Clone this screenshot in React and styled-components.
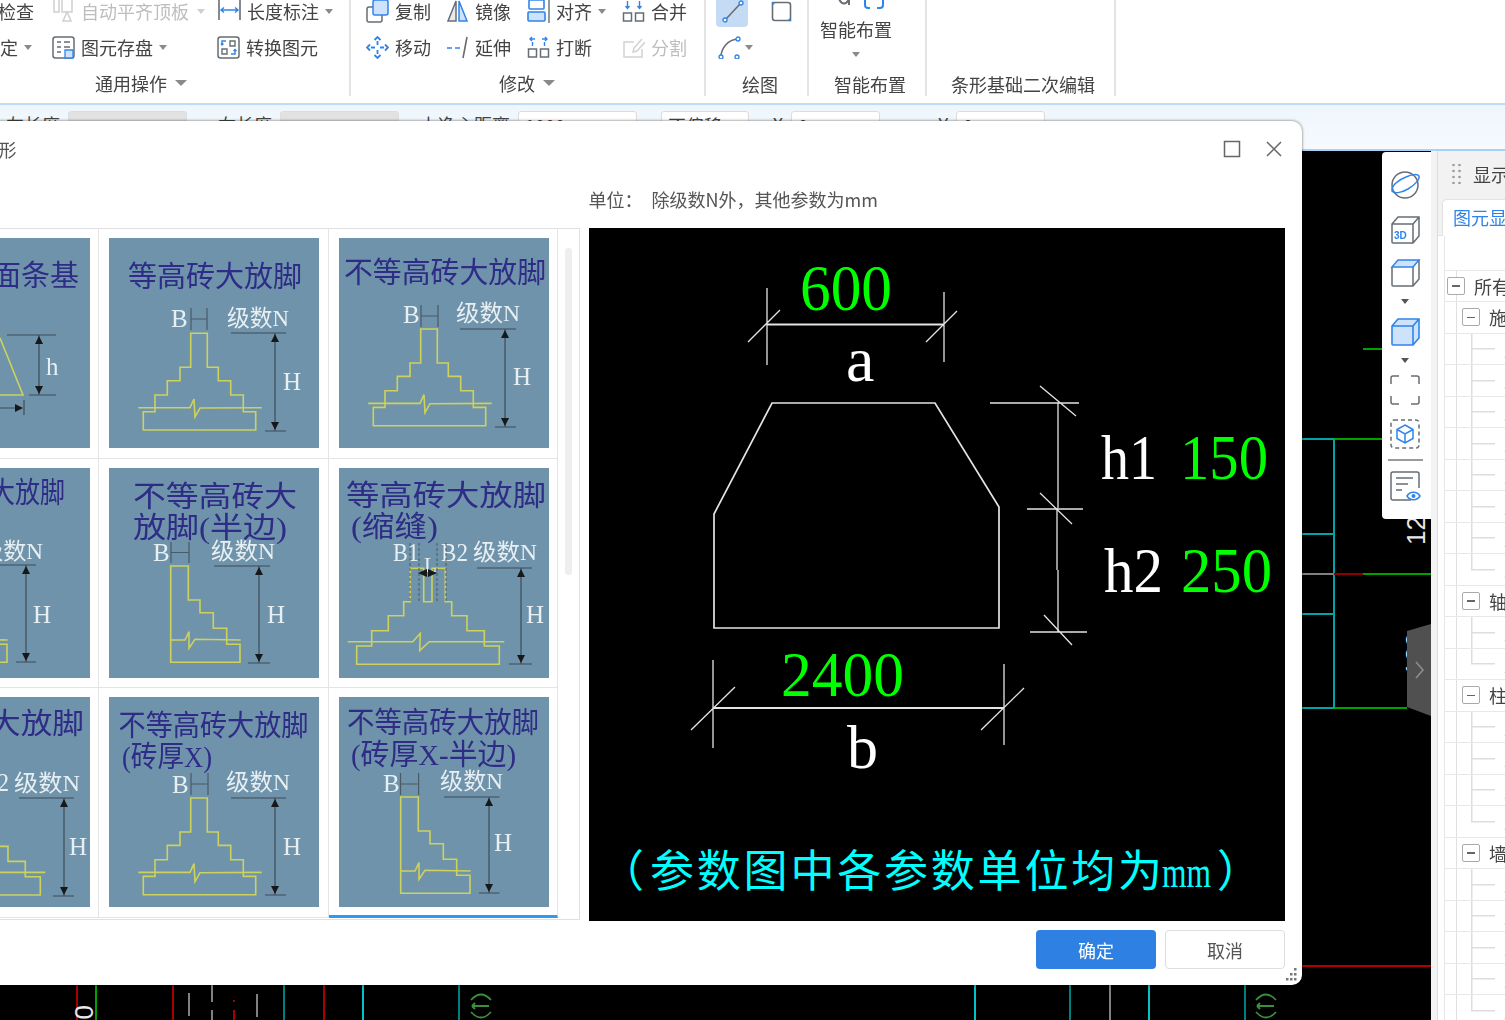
import React from 'react'
import styled, { createGlobalStyle } from 'styled-components'

const GlobalStyle = createGlobalStyle`
  html, body { margin: 0; padding: 0; background: #000; overflow: hidden; }
  * { box-sizing: border-box; }
`

const FONT = `"Noto Sans CJK SC", "Noto Sans", sans-serif`
const SERIF = `"Liberation Serif", "Noto Sans CJK SC", serif`
const GRAY = '#666d75'
const BLUE = '#2f84ea'
const TINT = '#cfe2fb'

const Page = styled.div`
  position: relative;
  width: 1505px;
  height: 1020px;
  overflow: hidden;
  display: flex;
  flex-direction: column;
  font-family: ${FONT};
  font-size: 18px;
  color: #444;
`

/* ---------- ribbon ---------- */

const Ribbon = styled.div`
  flex: none;
  height: 103px;
  display: flex;
  background: #fff;
  overflow: hidden;
  filter: blur(0.45px);
`
const Group = styled.div`
  flex: none;
  width: ${(p) => p.$w}px;
  height: 103px;
  margin-top: -7px;
  border-right: 2px solid #e4e4e4;
  padding-left: ${(p) => p.$pad || 0}px;
`
const Cols = styled.div`
  height: 72px;
  display: grid;
  grid-template-columns: ${(p) => p.$cols};
  grid-auto-rows: 36px;
`
const Item = styled.div`
  display: flex;
  align-items: center;
  gap: 6px;
  height: 36px;
  white-space: nowrap;
  margin-left: ${(p) => p.$ml || 0}px;
  color: ${(p) => (p.$off ? '#bdbdbd' : '#444')};
`
const Caret = styled.span`
  flex: none;
  width: 0;
  height: 0;
  border-left: 4px solid transparent;
  border-right: 4px solid transparent;
  border-top: 5px solid ${(p) => p.$c || '#8a8a8a'};
  margin-left: ${(p) => p.$ml ?? 0}px;
  margin-top: ${(p) => p.$mt ?? 0}px;
`
const LabelCaret = styled.span`
  flex: none;
  width: 0;
  height: 0;
  border-left: 6px solid transparent;
  border-right: 6px solid transparent;
  border-top: 6px solid #8a8a8a;
`
const GroupLabel = styled.div`
  height: 30px;
  display: flex;
  align-items: center;
  gap: 8px;
  margin-left: ${(p) => p.$at}px;
  margin-top: ${(p) => p.$dy || 0}px;
  white-space: nowrap;
`
const Ico = styled.svg`
  flex: none;
  width: 23px;
  height: 23px;
  display: block;
`
const DrawBtn = styled.div`
  width: 32px;
  height: 32px;
  border-radius: 4px;
  display: flex;
  align-items: center;
  justify-content: center;
  background: ${(p) => (p.$on ? '#c5dbf3' : 'transparent')};
`
const SmartCol = styled.div`
  width: 72px;
  height: 72px;
  margin-left: 11px;
  display: flex;
  flex-direction: column;
  align-items: center;
`
const SmartTop = styled.svg`
  flex: none;
  width: 48px;
  height: 16px;
  display: block;
  margin-left: 10px;
`
const SmartText = styled.div`
  margin-top: 6px;
  height: 28px;
  line-height: 28px;
  white-space: nowrap;
`

const DimIcon = () => (
  <Ico viewBox="0 0 23 23" fill="none">
    <path d="M1 -2V20M22 -2V20" stroke={GRAY} strokeWidth="1.6" />
    <path d="M3 10H20M6 7.5 3 10l3 2.5M17 7.5l3 2.5-3 2.5" stroke={BLUE} strokeWidth="1.4" />
  </Ico>
)
const AutoAlignIcon = () => (
  <Ico viewBox="0 0 23 23" fill="none" stroke="#cfcfcf" strokeWidth="1.5">
    <path d="M2 -2V12H7V-2M10 -2V12H20V-2" />
    <path d="M11 21 15 12l4 9Z" />
  </Ico>
)
const SaveIcon = () => (
  <Ico viewBox="0 0 23 23" fill="none">
    <rect x="1" y="1" width="21" height="21" rx="2.5" stroke={GRAY} strokeWidth="1.5" />
    <path d="M5 6H9M12 6H18M5 11H9M12 11H18M5 16H9" stroke={GRAY} strokeWidth="1.5" />
    <path d="M13 14h8v8h-8z" fill={TINT} stroke={BLUE} strokeWidth="1.3" />
  </Ico>
)
const ConvertIcon = () => (
  <Ico viewBox="0 0 23 23" fill="none">
    <rect x="1" y="1" width="21" height="21" rx="2.5" stroke={GRAY} strokeWidth="1.5" />
    <path d="M13 5h5v5h-5zM5 13h5v5H5z" stroke={GRAY} strokeWidth="1.4" />
    <path d="M9 5H5v4M4 7.5l1 1.5 1.5-1.5M14 18h4v-4M16.5 15 18 13.5l1.500 1.500" stroke={BLUE} strokeWidth="1.4" />
  </Ico>
)
const CopyIcon = () => (
  <Ico viewBox="0 0 23 23" fill="none">
    <rect x="1" y="7" width="15" height="15" rx="2" stroke={GRAY} strokeWidth="1.5" />
    <rect x="7" y="0" width="15" height="15" rx="2" fill={TINT} stroke={BLUE} strokeWidth="1.5" />
  </Ico>
)
const MirrorIcon = () => (
  <Ico viewBox="0 0 23 23" fill="none">
    <path d="M10 1 2 21h8Z" fill="#e8eaec" stroke={GRAY} strokeWidth="1.5" />
    <path d="M13 1l8 20h-8Z" fill={TINT} stroke={BLUE} strokeWidth="1.5" />
  </Ico>
)
const AlignIcon = () => (
  <Ico viewBox="0 0 23 23" fill="none">
    <rect x="2" y="0" width="15" height="9" rx="1" fill="#fff" stroke={BLUE} strokeWidth="1.6" />
    <rect x="1" y="12" width="17" height="9" rx="1" fill={TINT} stroke={BLUE} strokeWidth="1.6" />
    <path d="M22 -2V23" stroke={GRAY} strokeWidth="1.4" />
  </Ico>
)
const SquaresIcon = ({ out }) => (
  <Ico viewBox="0 0 23 23" fill="none">
    <path d="M1.500 13h8v8h-8zM13.500 13h8v8h-8z" stroke={GRAY} strokeWidth="1.5" />
    {out ? (
      <path d="M8 3H3M5 1 3 3l2 2M15 3h5M18 1l2 2-2 2M5.500 6v4M17.500 6v4" stroke={BLUE} strokeWidth="1.4" />
    ) : (
      <path d="M5.500 1v7M3.500 6l2 2.500 2-2.500M17.500 1v7M15.500 6l2 2.500 2-2.500" stroke={BLUE} strokeWidth="1.4" />
    )}
  </Ico>
)
const MoveIcon = () => (
  <Ico viewBox="0 0 23 23" fill="none" stroke={BLUE} strokeWidth="1.8">
    <path d="M11.500 5V9M11.500 14V18M5 11.500H9M14 11.500H18" />
    <path d="M8.500 4 11.500 1l3 3M8.500 19l3 3 3-3M4 8.500 1 11.500l3 3M19 8.500l3 3-3 3" />
  </Ico>
)
const ExtendIcon = () => (
  <Ico viewBox="0 0 23 23" fill="none">
    <path d="M1 12H6M9 12H14" stroke={BLUE} strokeWidth="1.6" />
    <path d="M21 1 17 22" stroke={GRAY} strokeWidth="1.6" />
  </Ico>
)
const SplitIcon = () => (
  <Ico viewBox="0 0 23 23" fill="none" stroke="#d2d2d2" strokeWidth="1.5">
    <path d="M12 6H2v15h18V13" />
    <path d="M20 3 12 12l-1 4 4-1 8-9" />
  </Ico>
)
const LineIcon = () => (
  <Ico viewBox="0 0 23 23" fill="none">
    <path d="M5 19 19 4" stroke={GRAY} strokeWidth="1.6" />
    <circle cx="4" cy="20" r="2" fill="#fff" stroke={BLUE} strokeWidth="1.3" />
    <circle cx="20" cy="3" r="2" fill="#fff" stroke={BLUE} strokeWidth="1.3" />
  </Ico>
)
const RectIcon = () => (
  <Ico viewBox="0 0 23 23" fill="none">
    <rect x="2.500" y="2.500" width="18" height="18" rx="2.500" stroke={GRAY} strokeWidth="1.6" />
    <circle cx="3" cy="3" r="1.500" fill={BLUE} />
    <circle cx="20" cy="20" r="1.500" fill={BLUE} />
  </Ico>
)
const ArcIcon = () => (
  <Ico viewBox="0 0 23 23" fill="none">
    <path d="M3 21C3 12 10 4 19 3" stroke={GRAY} strokeWidth="1.6" />
    <circle cx="3" cy="21" r="2" fill="#fff" stroke={BLUE} strokeWidth="1.3" />
    <circle cx="20" cy="3" r="2" fill="#fff" stroke={BLUE} strokeWidth="1.3" />
    <circle cx="19" cy="21" r="2" fill="#fff" stroke={BLUE} strokeWidth="1.3" />
  </Ico>
)

/* ---------- option bar ---------- */

const OptionBar = styled.div`
  flex: none;
  height: 48px;
  display: flex;
  padding-top: 6px;
  border-top: 2px solid #bcdcf7;
  border-bottom: 2px solid #a9d1f3;
  background: linear-gradient(#eef6fc, #f6fafe);
`
const FieldLabel = styled.div`
  flex: none;
  width: ${(p) => p.$w}px;
  padding-right: 8px;
  text-align: right;
  white-space: nowrap;
`
const Field = styled.div`
  flex: none;
  width: ${(p) => p.$w}px;
  height: 30px;
  padding-left: 6px;
  border: 1px solid #ddd;
  border-radius: 3px;
  background: ${(p) => (p.$off ? '#e2e2e2' : '#fff')};
`

/* ---------- work area ---------- */

const Work = styled.div`
  flex: 1;
  min-height: 0;
  display: flex;
`
const Canvas = styled.div`
  position: relative;
  flex: none;
  width: 1431px;
  background: #000;
  overflow: hidden;
`
const CadLines = styled.svg`
  display: block;
  width: 1431px;
  height: 869px;
`
const CadText = styled.text`
  font-family: "Liberation Sans", sans-serif;
  font-size: ${(p) => p.$s}px;
  fill: #e8e8e8;
`
const ToolPanel = styled.div`
  position: absolute;
  left: 1382px;
  top: 1px;
  width: 49px;
  height: 367px;
  padding: 17px 3px 0 0;
  display: flex;
  flex-direction: column;
  align-items: center;
  background: #fff;
  border-radius: 4px 0 0 4px;
  filter: blur(0.35px);
`
const ToolIcon = styled.svg`
  flex: none;
  display: block;
  width: 32px;
  height: 32px;
  margin-top: ${(p) => p.$mt || 0}px;
`
const ToolCaret = styled.div`
  flex: none;
  height: 27px;
  display: flex;
  align-items: center;
  justify-content: center;
`
const ToolRule = styled.div`
  flex: none;
  width: 35px;
  height: 2px;
  margin: 9px 0;
  background: #9a9a9a;
`
const Flap = styled.svg`
  position: absolute;
  left: 1407px;
  top: 473px;
  width: 24px;
  height: 94px;
`
const PanelGutter = styled.div`
  flex: none;
  width: 6px;
  background: #f3f3f3;
`
const SidePanel = styled.div`
  flex: 1;
  min-width: 0;
  overflow: hidden;
  background: #fff;
  border-left: 1px solid #ddd;
  white-space: nowrap;
  filter: blur(0.4px);
`
const PanelHead = styled.div`
  height: 45px;
  display: flex;
  align-items: center;
  gap: 12px;
  padding-left: 14px;
  background: #f2f2f2;
`
const Grip = styled.svg`
  flex: none;
  width: 9px;
  height: 20px;
`
const TabRow = styled.div`
  height: 40px;
  padding: 3px 0 0 4px;
  background: #f2f2f2;
  border-bottom: 1px solid #e2e2e2;
`
const Tab = styled.div`
  height: 37px;
  line-height: 34px;
  padding-left: 10px;
  color: ${BLUE};
  background: #fff;
  border: 1px solid #e2e2e2;
  border-bottom: 0;
  border-right: 0;
  border-radius: 5px 0 0 0;
`
const TreeWrap = styled.div`
  margin-left: 6px;
  padding-top: 33.500px;
  border-left: 1px solid #e6e6e6;
`
const TreeRow = styled.div`
  height: 31.500px;
  display: flex;
  align-items: stretch;
  border-top: 1.5px solid #e8e8e8;
  background: linear-gradient(#e0e0e0, #e0e0e0) 11px 0 / 1px 100% no-repeat;
  padding-left: ${(p) => p.$pad}px;
`
const Toggle = styled.span`
  flex: none;
  align-self: center;
  width: 18px;
  height: 18px;
  display: flex;
  align-items: center;
  justify-content: center;
  background: #fff;
  border: 1.5px solid #aaa;
  border-radius: 2px;
  &::after {
    content: '';
    width: 8px;
    height: 1.5px;
    background: #666;
  }
`
const TreeText = styled.span`
  align-self: center;
  margin-left: 9px;
  line-height: 24px;
`
const Stub = styled.span`
  flex: none;
  width: 24px;
  margin-left: 26px;
  background:
    linear-gradient(#ddd, #ddd) 0 0 / 1.5px ${(p) => (p.$last ? '50%' : '100%')} no-repeat,
    linear-gradient(#ddd, #ddd) 0 50% / 100% 1.5px no-repeat;
`
const LeafText = styled.span`
  align-self: center;
  margin-left: 9px;
  color: #e9a765;
  line-height: 24px;
`

/* ---------- dialog ---------- */

const Dialog = styled.div`
  position: absolute;
  left: -140px;
  top: 121px;
  width: 1442px;
  height: 864px;
  display: flex;
  flex-direction: column;
  padding-left: 9.500px;
  background: #fff;
  border-radius: 10px;
  box-shadow: 0 0 3px rgba(0, 0, 0, 0.6);
`
const TitleBar = styled.div`
  flex: none;
  height: 58px;
  display: flex;
  align-items: center;
  padding: 0 19px 2px 21px;
  filter: blur(0.4px);
`
const TitleText = styled.div`
  flex: 1;
  color: #555;
`
const WinBtn = styled.svg`
  flex: none;
  width: 18px;
  height: 18px;
  margin-left: ${(p) => p.$ml}px;
`
const InfoRow = styled.div`
  flex: none;
  height: 49px;
  display: flex;
  align-items: center;
  padding-bottom: 10px;
  color: #555;
  white-space: nowrap;
  filter: blur(0.4px);
`
const InfoLeft = styled.div`
  flex: none;
  width: 719px;
  padding-left: 42px;
`
const InfoUnit = styled.div`
  flex: none;
  width: 63px;
`
const DialogBody = styled.div`
  flex: none;
  height: 693px;
  display: flex;
  gap: 8.500px;
`
const Gallery = styled.div`
  flex: none;
  width: 710.500px;
  height: 692px;
  display: flex;
  border: 1.5px solid #e0e0e0;
  border-left: 0;
`
const Cells = styled.div`
  flex: none;
  width: 688.500px;
  display: grid;
  grid-template-columns: repeat(3, 229.500px);
  grid-auto-rows: 229.500px;
`
const Cell = styled.div`
  display: flex;
  justify-content: flex-end;
  padding: 9px 8.500px 0 0;
  border-right: 1.5px solid #e4e4e4;
  border-bottom: ${(p) => (p.$on ? `3px solid #2f9bf0` : '1.500px solid #e4e4e4')};
`
const Thumb = styled.svg`
  flex: none;
  display: block;
  width: 210px;
  height: 210px;
  background: #6f93ab;
  filter: blur(0.6px);
`
const ThumbTitle = styled.text`
  font-family: ${SERIF};
  font-size: 29px;
  fill: #2e2c86;
`
const ThumbLabel = styled.text`
  font-family: ${SERIF};
  font-size: ${(p) => p.$s || 25}px;
  fill: #e8eff3;
`
const Scroll = styled.div`
  flex: 1;
  padding: 19px 0 0 7px;
`
const ScrollThumb = styled.div`
  width: 7px;
  height: 327px;
  border-radius: 3px;
  background: #eee;
`
const Preview = styled.svg`
  flex: none;
  display: block;
  width: 696px;
  height: 693px;
  background: #000;
`
const PreviewText = styled.text`
  font-family: ${SERIF};
  font-size: ${(p) => p.$s}px;
  fill: ${(p) => p.$c};
`
const DialogFoot = styled.div`
  flex: none;
  display: flex;
  justify-content: flex-end;
  gap: 9px;
  padding: 9px 17px 0 0;
`
const Button = styled.button`
  width: 120px;
  height: 39px;
  padding: 0;
  font: inherit;
  border-radius: 4px;
  color: ${(p) => (p.$primary ? '#fff' : '#555')};
  background: ${(p) => (p.$primary ? '#2f80e3' : '#fff')};
  border: ${(p) => (p.$primary ? '0' : '1.500px solid #ddd')};
  filter: blur(0.3px);
`
const ResizeGrip = styled.svg`
  position: absolute;
  right: 5px;
  bottom: 4px;
  width: 12px;
  height: 13px;
`

/* ---------- thumbnail data ---------- */

const FULL = {
  shape: [[81.7, 0], [98.3, 0], [98.3, 34], [109.3, 34], [109.3, 47.4], [121.7, 47.4], [121.7, 61.7], [134.3, 61.7], [134.3, 78.4], [146.7, 78.4], [146.7, 96.7], [34.3, 96.7], [34.3, 78.4], [46, 78.4], [46, 61.7], [58.3, 61.7], [58.3, 47.4], [71, 47.4], [71, 34], [81.7, 34]],
  cut: [[29.3, 74.4], [81, 74.4], [85, 65.7], [86, 83.7], [91, 74.7], [152.7, 74.4]],
}
const HALF = {
  shape: [[61.7, 0], [79.3, 0], [79.3, 34], [91, 34], [91, 46.7], [104.3, 46.7], [104.3, 62.3], [117.7, 62.3], [117.7, 78.3], [131, 78.3], [131, 96.3], [61.7, 96.3]],
  cut: [[61.7, 74], [76, 74], [80, 65.7], [80, 82.3], [86, 73.3], [131.7, 74]],
}
const JOINT = {
  shape: [[71.3, 0], [84.7, 0], [84.7, 33.4], [93, 33.4], [93, 0], [106.3, 0], [106.3, 33.4], [112.7, 33.4], [112.7, 47.4], [128, 47.4], [128, 62.4], [145.3, 62.4], [145.3, 77.7], [160.3, 77.7], [160.3, 96], [17.7, 96], [17.7, 77.7], [32.7, 77.7], [32.7, 62.4], [49.3, 62.4], [49.3, 47.4], [64.7, 47.4], [64.7, 33.4], [71.3, 33.4]],
  cut: [[8.7, 73.4], [73.7, 73.4], [81.3, 65], [80.7, 82.4], [90.3, 73.4], [165.3, 73.4]],
}

const pts = (list, dx, dy) => list.map(([x, y]) => `${x + dx},${y + dy}`).join(' ')

const cards = [
  {
    titles: [['梯形截面条基', 25, 48, 174]],
    slope: true,
    dim: { x: 159, y1: 97, y2: 157, l: 127, r: 176, bl: 149 },
    small: { x: 166, y: 137, t: 'h' },
  },
  {
    titles: [['等高砖大放脚', 19, 49, 174]],
    foot: FULL, top: 95.3,
    b: [62, 89], ticks: [82, 98, 70, 92], n: [118, 88, 62],
    dim: { x: 166, y1: 95, y2: 193, l: 122, r: 177, bl: 156 },
    h: [174, 152],
  },
  {
    titles: [['不等高砖大放脚', 5, 45, 202]],
    foot: FULL, top: 91,
    b: [64, 85], ticks: [82, 99, 67, 89], n: [117, 83, 64],
    dim: { x: 166, y1: 91, y2: 189, l: 121, r: 177, bl: 156 },
    h: [174, 147],
  },
  {
    titles: [['不等高砖大放脚', 10, 35, 175]],
    foot: HALF, top: 98, fx: -4,
    n: [100, 91, 63],
    dim: { x: 146, y1: 97, y2: 194, l: 96, r: 156, bl: 136 },
    h: [153, 155],
  },
  {
    titles: [['不等高砖大', 24, 39, 164], ['放脚(半边)', 24, 70, 154]],
    foot: HALF, top: 98,
    b: [44, 93], ticks: [62, 80, 74, 95], n: [102, 91, 64],
    dim: { x: 150, y1: 98, y2: 195, l: 105, r: 161, bl: 139 },
    h: [158, 155],
  },
  {
    titles: [['等高砖大放脚', 7, 38, 200], ['(缩缝)', 12, 69, 87]],
    foot: JOINT, top: 100.3,
    b1: 93, n: [134, 92, 64], joint: true,
    dim: { x: 182, y1: 100, y2: 196, l: 138, r: 193, bl: 170 },
    h: [187, 155],
  },
  {
    titles: [['等高砖大放脚', 14, 37, 190]],
    foot: JOINT, top: 102,
    b1: 94, n: [134, 94, 66],
    dim: { x: 184, y1: 101, y2: 199, l: 139, r: 194, bl: 173 },
    h: [189, 158],
  },
  {
    titles: [['不等高砖大放脚', 9.5, 39, 190], ['(砖厚X)', 13, 70, 90]],
    foot: FULL, top: 101,
    b: [63, 96], ticks: [82, 99, 76, 98], n: [117, 93, 64],
    dim: { x: 166, y1: 101, y2: 198, l: 122, r: 177, bl: 156 },
    h: [174, 158],
  },
  {
    titles: [['不等高砖大放脚', 8, 36, 192], ['(砖厚X-半边)', 12, 68, 165]],
    foot: HALF, top: 100,
    b: [44, 95], ticks: [61.5, 79.6, 76, 98], n: [101, 92, 63],
    dim: { x: 150, y1: 100, y2: 196, l: 105, r: 160.5, bl: 140 },
    h: [155, 154],
  },
]

const DimArrow = ({ x, y1, y2, l, r, bl }) => (
  <g>
    <path d={`M${l} ${y1}H${r}M${bl} ${y2}H${r}M${x} ${y1}V${y2}`} stroke="#3f4b55" strokeWidth="1.2" fill="none" />
    <path d={`M${x} ${y1 + 1}l-4 8h8ZM${x} ${y2 - 1}l-4 -8h8Z`} fill="#16181a" />
  </g>
)

const FootingThumb = ({ card }) => {
  const { titles, foot, top, fx = 0, b, ticks, n, dim, h, slope, small, joint, b1 } = card
  return (
    <Thumb viewBox="0 0 210 210">
      {titles.map(([t, x, y, w]) => (
        <ThumbTitle key={t} x={x} y={y} textLength={w} lengthAdjust="spacingAndGlyphs">{t}</ThumbTitle>
      ))}
      {foot && (
        <>
          <polygon points={pts(foot.shape, fx, top)} fill="none" stroke="#cdd25c" strokeWidth="1.6" />
          <polyline points={pts(foot.cut, fx, top)} fill="none" stroke="#cdd25c" strokeWidth="1.6" />
        </>
      )}
      {slope && (
        <>
          <polyline points="60,157 143,157 120,100" fill="none" stroke="#cdd25c" strokeWidth="1.6" />
          <path d="M100 170H140M144 162V177" stroke="#3f4b55" strokeWidth="1.2" fill="none" />
          <path d="M143 170l-8 -4v8Z" fill="#16181a" />
        </>
      )}
      {ticks && (
        <path
          d={`M${ticks[0]} ${ticks[2]}V${ticks[3]}M${ticks[1]} ${ticks[2]}V${ticks[3]}M${ticks[0]} ${(ticks[2] + ticks[3]) / 2}H${ticks[1]}`}
          stroke="#4a5a66" strokeWidth="1.2" fill="none"
        />
      )}
      {b && <ThumbLabel x={b[0]} y={b[1]}>B</ThumbLabel>}
      {b1 && (
        <>
          <ThumbLabel x={54} y={b1} textLength={26} lengthAdjust="spacingAndGlyphs">B1</ThumbLabel>
          <ThumbLabel x={102} y={b1} textLength={27} lengthAdjust="spacingAndGlyphs">B2</ThumbLabel>
        </>
      )}
      {joint && (
        <>
          <path d="M71 75V134M80 75V134M98 75V134M107 75V134" stroke="#4a5a66" strokeWidth="1" strokeDasharray="3 2" fill="none" />
          <ThumbLabel x={85} y={104} $s={21}>L</ThumbLabel>
          <path d="M79 105l9 -4v8ZM98 105l-9 -4v8Z" fill="#16181a" />
        </>
      )}
      {n && (
        <ThumbLabel x={n[0]} y={n[1]} textLength={n[2]} lengthAdjust="spacingAndGlyphs" $s={23}>级数N</ThumbLabel>
      )}
      {dim && <DimArrow {...dim} />}
      {h && <ThumbLabel x={h[0]} y={h[1]}>H</ThumbLabel>}
      {small && <ThumbLabel x={small.x} y={small.y}>{small.t}</ThumbLabel>}
    </Thumb>
  )
}

/* ---------- tree data ---------- */

const leaves = (n, key) =>
  Array.from({ length: n }, (_, i) => ({ kind: 'leaf', key: `${key}${i}`, last: i === n - 1 }))

const treeRows = [
  { kind: 'root', key: 'all', text: '所有构件' },
  { kind: 'group', key: 'a', text: '施工段' },
  ...leaves(8, 'a'),
  { kind: 'group', key: 'b', text: '轴线' },
  ...leaves(2, 'b'),
  { kind: 'group', key: 'c', text: '柱' },
  ...leaves(4, 'c'),
  { kind: 'group', key: 'd', text: '墙' },
  ...leaves(5, 'd'),
]

const GreenMark = ({ x }) => (
  <path
    d={`M${x - 10} 1000Q${x} 989 ${x + 10} 1000M${x - 10} 1012Q${x} 1023 ${x + 10} 1012M${x - 8} 1006H${x + 8}M${x - 9} 1006l3 -3M${x - 9} 1006l3 3`}
    stroke="#3c8f3c" strokeWidth="1.800" fill="none"
  />
)

const App = () => (
  <Page>
    <GlobalStyle />

    <Ribbon>
      <Group $w={351}>
        <Cols $cols="52px 166px 1fr">
          <Item $ml={-2}>检查</Item>
          <Item $off>
            <AutoAlignIcon />自动平齐顶板<Caret $c="#cfcfcf" $ml={2} />
          </Item>
          <Item><DimIcon />长度标注<Caret /></Item>
          <Item $ml={-18}>设定<Caret /></Item>
          <Item><SaveIcon />图元存盘<Caret /></Item>
          <Item $ml={-1}><ConvertIcon />转换图元</Item>
        </Cols>
        <GroupLabel $at={95} $dy={3}>通用操作<LabelCaret /></GroupLabel>
      </Group>

      <Group $w={355} $pad={15}>
        <Cols $cols="80px 81px 95px 1fr">
          <Item><CopyIcon />复制</Item>
          <Item><MirrorIcon />镜像</Item>
          <Item><AlignIcon />对齐<Caret /></Item>
          <Item><SquaresIcon />合并</Item>
          <Item><MoveIcon />移动</Item>
          <Item><ExtendIcon />延伸</Item>
          <Item><SquaresIcon out />打断</Item>
          <Item $off><SplitIcon />分割</Item>
        </Cols>
        <GroupLabel $at={133} $dy={3}>修改<LabelCaret /></GroupLabel>
      </Group>

      <Group $w={103} $pad={10}>
        <Cols $cols="54px 1fr">
          <Item><DrawBtn $on><LineIcon /></DrawBtn></Item>
          <Item><RectIcon /></Item>
          <Item $ml={2}><ArcIcon /><Caret $ml={-2} /></Item>
        </Cols>
        <GroupLabel $at={26} $dy={4}>绘图</GroupLabel>
      </Group>

      <Group $w={118}>
        <SmartCol>
          <SmartTop viewBox="0 0 48 16" fill="none">
            <path d="M2 6c3 6 7 6 10 0M12 2v10M16 6h5" stroke={GRAY} strokeWidth="2" />
            <path d="M28 7v5c0 2 1 3 3 3h2M40 15h3c2 0 3-1 3-3V7" stroke={BLUE} strokeWidth="2" />
          </SmartTop>
          <SmartText>智能布置</SmartText>
          <Caret $mt={9} />
        </SmartCol>
        <GroupLabel $at={25} $dy={4}>智能布置</GroupLabel>
      </Group>

      <Group $w={189}>
        <Cols $cols="1fr" />
        <GroupLabel $at={24} $dy={4}>条形基础二次编辑</GroupLabel>
      </Group>
    </Ribbon>

    <OptionBar>
      <FieldLabel $w={68}>左长度</FieldLabel>
      <Field $w={119} $off />
      <FieldLabel $w={93}>右长度</FieldLabel>
      <Field $w={119} $off />
      <FieldLabel $w={119}>上净心距离</FieldLabel>
      <Field $w={119}>1000</Field>
      <FieldLabel $w={24} />
      <Field $w={88}>不偏移</Field>
      <FieldLabel $w={42}>X</FieldLabel>
      <Field $w={89}>0</Field>
      <FieldLabel $w={76}>Y</FieldLabel>
      <Field $w={89}>0</Field>
    </OptionBar>

    <Work>
      <Canvas>
        <CadLines viewBox="0 151 1431 869" fill="none" strokeWidth="2">
          <path d="M1363 349H1382M1334 439H1382M1334 708H1407M1363 574H1431" stroke="#00a000" />
          <path d="M1302 439H1334M1302 534H1334M1302 614H1334M1302 708H1334M1334 439V708" stroke="#00a5a8" />
          <path d="M1302 574H1334" stroke="#808080" />
          <path d="M1334 574H1363" stroke="#8a0000" />
          <path d="M1302 966H1431" stroke="#b00000" />
          <path d="M77 985V1020M173 985V1020M324 985V1020M234 1010V1020M234 1000V1002" stroke="#a80000" />
          <path d="M96 985V1020" stroke="#00a000" />
          <path d="M189 993V1016M212 985V1002M212 1010V1020M257 994V1017M1110 985V1020" stroke="#808080" />
          <path d="M284 985V1020M459 985V1020M1070 985V1020M1245 985V1020" stroke="#007f80" />
          <path d="M363 985V1020M975 985V1020M1149 985V1020" stroke="#00c4c8" />
          <GreenMark x={481} />
          <GreenMark x={1266} />
          <CadText $s={26} x={0} y={0} transform="translate(1425 545) rotate(-90)">12</CadText>
          <CadText $s={26} x={0} y={0} transform="translate(1424 676) rotate(-90)">120</CadText>
          <CadText $s={26} x={0} y={0} textAnchor="end" transform="translate(93 1005) rotate(-90)">1500</CadText>
        </CadLines>

        <ToolPanel>
          <ToolIcon viewBox="0 0 32 32" fill="none">
            <circle cx="16" cy="16" r="13" stroke={GRAY} strokeWidth="1.500" />
            <path d="M3 22C2 17 9 11 17 8c6-3 12-3 13-1 1 3-4 9-11 13-7 4-14 5-16 2Z" stroke={BLUE} strokeWidth="1.500" />
          </ToolIcon>
          <ToolIcon $mt={12} viewBox="0 0 32 32" fill="none" stroke={GRAY} strokeWidth="1.500">
            <path d="M3 11 9 4h21v19l-6 7H4a1 1 0 0 1-1-1ZM3 11h21v19M24 11l6-7" />
            <text x="5" y="26" fontSize="10" fontWeight="700" fontFamily="Liberation Sans" fill={BLUE} stroke="none">3D</text>
          </ToolIcon>
          <ToolIcon $mt={11} viewBox="0 0 32 32" fill="none" strokeWidth="1.500">
            <path d="M3 11v18a1 1 0 0 0 1 1h20l6-7V4M24 11v19" stroke={GRAY} />
            <path d="M3 11 9 4h21l-6 7Z" fill={TINT} stroke={BLUE} />
          </ToolIcon>
          <ToolCaret><Caret $c="#555" /></ToolCaret>
          <ToolIcon viewBox="0 0 32 32" fill={TINT} stroke={BLUE} strokeWidth="1.600">
            <path d="M3 11 9 4h21v19l-6 7H4a1 1 0 0 1-1-1ZM3 11h21v19M24 11l6-7" />
          </ToolIcon>
          <ToolCaret><Caret $c="#555" /></ToolCaret>
          <ToolIcon viewBox="0 0 32 32" fill="none" stroke={GRAY} strokeWidth="1.500">
            <path d="M2 10V4a2 2 0 0 1 2-2h6M22 2h6a2 2 0 0 1 2 2v6M30 22v6a2 2 0 0 1-2 2h-6M10 30H4a2 2 0 0 1-2-2v-6" />
          </ToolIcon>
          <ToolIcon $mt={12} viewBox="0 0 32 32" fill="none">
            <rect x="2" y="2" width="28" height="28" rx="3" stroke={GRAY} strokeWidth="1.500" strokeDasharray="4 3" />
            <path d="M16 7 24 11.500v9L16 25l-8-4.500v-9ZM8 11.500 16 16l8-4.500M16 16v9" stroke={BLUE} strokeWidth="1.500" />
          </ToolIcon>
          <ToolRule />
          <ToolIcon viewBox="0 0 32 32" fill="none">
            <path d="M22 30H4a2 2 0 0 1-2-2V4a2 2 0 0 1 2-2h24a2 2 0 0 1 2 2v14" stroke={GRAY} strokeWidth="1.500" />
            <path d="M7 8H24M7 14H19M7 20H13" stroke={GRAY} strokeWidth="1.500" />
            <path d="M18 26c3-5 10-5 13 0-3 5-10 5-13 0Z" fill="#fff" stroke={BLUE} strokeWidth="1.500" />
            <circle cx="24.500" cy="26" r="2" fill={BLUE} />
          </ToolIcon>
        </ToolPanel>

        <Flap viewBox="0 0 24 94">
          <path d="M24 0 0 7V83L24 92Z" fill="#505050" />
          <path d="M9 38 16 46 9 54" fill="none" stroke="#8a8a8a" strokeWidth="1.800" />
        </Flap>
      </Canvas>
      <PanelGutter />
      <SidePanel>
        <PanelHead>
          <Grip viewBox="0 0 9 20" fill="#9a9a9a">
            {[1, 7, 13, 19].map((y) => (
              <React.Fragment key={y}>
                <circle cx="1.500" cy={y} r="1.300" />
                <circle cx="7.500" cy={y} r="1.300" />
              </React.Fragment>
            ))}
          </Grip>
          显示设置
        </PanelHead>
        <TabRow><Tab>图元显示</Tab></TabRow>
        <TreeWrap>
          {treeRows.map((row) =>
            row.kind === 'leaf' ? (
              <TreeRow key={row.key} $pad={0}>
                <Stub $last={row.last} />
                <LeafText>显示</LeafText>
              </TreeRow>
            ) : (
              <TreeRow key={row.key} $pad={row.kind === 'root' ? 2 : 17}>
                <Toggle />
                <TreeText>{row.text}</TreeText>
              </TreeRow>
            )
          )}
        </TreeWrap>
      </SidePanel>
    </Work>

    <Dialog>
      <TitleBar>
        <TitleText>选择参数化图形</TitleText>
        <WinBtn viewBox="0 0 18 18" fill="none" stroke="#666" strokeWidth="1.500">
          <rect x="1.500" y="1.500" width="15" height="15" />
        </WinBtn>
        <WinBtn $ml={24} viewBox="0 0 18 18" fill="none" stroke="#666" strokeWidth="1.500">
          <path d="M2 2 16 16M16 2 2 16" />
        </WinBtn>
      </TitleBar>
      <InfoRow>
        <InfoLeft>选择图形：</InfoLeft>
        <InfoUnit>单位：</InfoUnit>
        除级数N外，其他参数为mm
      </InfoRow>
      <DialogBody>
        <Gallery>
          <Cells>
            {cards.map((card, i) => (
              <Cell key={i} $on={i === 8}>
                <FootingThumb card={card} />
              </Cell>
            ))}
          </Cells>
          <Scroll><ScrollThumb /></Scroll>
        </Gallery>
        <Preview viewBox="589 228 696 693" fill="none">
          <g stroke="#e4e4e4" strokeWidth="1.300">
            <path d="M767 288V365M944 292V362M748 342 780 310M926 342 957 311" />
            <path d="M767 324.500H944" strokeWidth="2" />
            <path d="M772 403H935L999 507V628H714V514Z" strokeWidth="1.700" />
            <path d="M990 403H1079M1058 403V508M1057 508V570M1058 570V632M1040 386 1076 416" />
            <path d="M1027 509H1083M1040 493 1072 524M1030 632H1087M1044 615 1072 645" />
            <path d="M713 660V748M1004 664V745M691 730 735 687M981 730 1024 688" />
            <path d="M713 708H1004" strokeWidth="2" />
          </g>
          <PreviewText $s={66} $c="#00ff00" x={800} y={310} textLength={92} lengthAdjust="spacingAndGlyphs">600</PreviewText>
          <PreviewText $s={64} $c="#fff" x={846} y={381}>a</PreviewText>
          <PreviewText $s={64} $c="#fff" x={1101} y={479} textLength={56} lengthAdjust="spacingAndGlyphs">h1</PreviewText>
          <PreviewText $s={64} $c="#00ff00" x={1180} y={479} textLength={88} lengthAdjust="spacingAndGlyphs">150</PreviewText>
          <PreviewText $s={64} $c="#fff" x={1104} y={592} textLength={59} lengthAdjust="spacingAndGlyphs">h2</PreviewText>
          <PreviewText $s={64} $c="#00ff00" x={1181} y={592} textLength={91} lengthAdjust="spacingAndGlyphs">250</PreviewText>
          <PreviewText $s={64} $c="#00ff00" x={781} y={696} textLength={123} lengthAdjust="spacingAndGlyphs">2400</PreviewText>
          <PreviewText $s={62} $c="#fff" x={847} y={768}>b</PreviewText>
          <PreviewText $s={44} $c="#00ffff" x={600} y={887}>（</PreviewText>
          <PreviewText $s={44} $c="#00ffff" x={650} y={887} textLength={512} lengthAdjust="spacing">参数图中各参数单位均为</PreviewText>
          <PreviewText $s={44} $c="#00ffff" x={1162} y={887} textLength={49} lengthAdjust="spacingAndGlyphs">mm</PreviewText>
          <PreviewText $s={44} $c="#00ffff" x={1217} y={887}>）</PreviewText>
        </Preview>
      </DialogBody>
      <DialogFoot>
        <Button $primary>确定</Button>
        <Button>取消</Button>
      </DialogFoot>
      <ResizeGrip viewBox="0 0 12 13" fill="#777">
        <rect x="9" y="0" width="2.500" height="2.500" />
        <rect x="9" y="5" width="2.500" height="2.500" />
        <rect x="5" y="5" width="2.500" height="2.500" />
        <rect x="9" y="10" width="2.500" height="2.500" />
        <rect x="5" y="10" width="2.500" height="2.500" />
        <rect x="1" y="10" width="2.500" height="2.500" />
      </ResizeGrip>
    </Dialog>
  </Page>
)

export default App
